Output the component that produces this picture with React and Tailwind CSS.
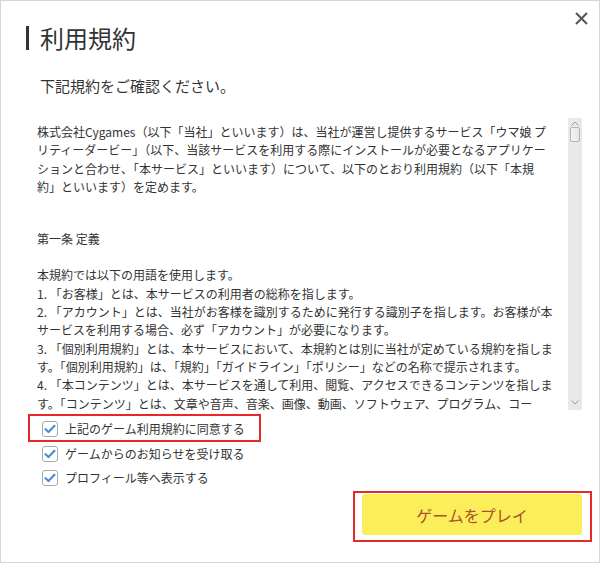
import React from "react";

const intro = [
  "株式会社Cygames（以下「当社」といいます）は、当社が運営し提供するサービス「ウマ娘 プ",
  "リティーダービー」（以下、当該サービスを利用する際にインストールが必要となるアプリケー",
  "ションと合わせ、「本サービス」といいます）について、以下のとおり利用規約（以下「本規",
  "約」といいます）を定めます。",
];

const definitions = [
  "本規約では以下の用語を使用します。",
  "1. 「お客様」とは、本サービスの利用者の総称を指します。",
  "2. 「アカウント」とは、当社がお客様を識別するために発行する識別子を指します。お客様が本",
  "サービスを利用する場合、必ず「アカウント」が必要になります。",
  "3. 「個別利用規約」とは、本サービスにおいて、本規約とは別に当社が定めている規約を指しま",
  "す。「個別利用規約」は、「規約」「ガイドライン」「ポリシー」などの名称で提示されます。",
  "4. 「本コンテンツ」とは、本サービスを通して利用、閲覧、アクセスできるコンテンツを指しま",
  "す。「コンテンツ」とは、文章や音声、音楽、画像、動画、ソフトウェア、プログラム、コー",
];

const CheckBox = () => (
  <span className="flex h-[16px] w-[16px] shrink-0 items-center justify-center rounded-[3px] border border-[#a9a9a9] bg-white">
    <svg width="12" height="10" viewBox="0 0 12 10" fill="none">
      <path
        d="M1.5 5.2 L4.5 8 L10.5 1.8"
        stroke="#4a8ad8"
        strokeWidth="2.2"
        strokeLinecap="round"
        strokeLinejoin="round"
      />
    </svg>
  </span>
);

const Chevron = ({ down }) => (
  <svg width="8" height="5" viewBox="0 0 8 5" fill="none">
    <path
      d={down ? "M0.5 0.5 L4 4 L7.5 0.5" : "M0.5 4.5 L4 1 L7.5 4.5"}
      stroke="#9a9a9a"
      strokeWidth="1"
    />
  </svg>
);

export default function App() {
  return (
    <div
      className="relative flex h-[563px] w-[600px] flex-col border border-[#d6d6d6] bg-white text-[#333]"
      style={{ fontFamily: '"Noto Sans CJK JP", "Noto Sans", sans-serif' }}
    >
      <button className="absolute right-[11px] top-[11px] text-[#555]">
        <svg width="13" height="13" viewBox="0 0 13 13" fill="none">
          <path d="M1 1 L12 12 M12 1 L1 12" stroke="currentColor" strokeWidth="2" />
        </svg>
      </button>

      <div className="ml-[25px] mt-[25px] flex h-[24px] items-center">
        <span className="h-[24px] w-[3px] bg-[#333]" />
        <h1 className="ml-[11px] text-[24px] leading-[24px] text-[#333]">利用規約</h1>
      </div>

      <p className="ml-[39px] mt-[26px] text-[15px] leading-[20px]">
        下記規約をご確認ください。
      </p>

      <div className="mt-[22px] flex h-[292px] pl-[36px] pr-[17px]">
        <div className="flex-1 overflow-hidden pt-[5px] text-[12px] leading-[18.3px] whitespace-nowrap">
          <div className="mb-[34px]">
            {intro.map((line) => (
              <div key={line}>{line}</div>
            ))}
          </div>
          <div className="mb-[18px]">第一条 定義</div>
          {definitions.map((line) => (
            <div key={line}>{line}</div>
          ))}
        </div>
        <div className="flex w-[14px] flex-col items-center bg-[#e9e9e9]">
          <div className="flex h-[8px] items-center pt-[2px]">
            <Chevron />
          </div>
          <div className="mt-[1px] h-[15px] w-[10px] rounded-[2px] border border-[#b3b3b3] bg-gradient-to-r from-[#f4f4f4] to-[#e6e6e6]" />
          <div className="flex-1" />
          <div className="flex h-[10px] items-start pb-[4px]">
            <Chevron down />
          </div>
        </div>
      </div>

      <div className="mt-[4px] flex flex-col pl-[27px] text-[12px] text-[#333]">
        <div className="flex h-[28px] w-[233px] items-center gap-[7px] border-2 border-[#e5282c] pl-[12px] pt-[2px]">
          <CheckBox />
          <span>上記のゲーム利用規約に同意する</span>
        </div>
        <div className="flex h-[24px] items-center gap-[7px] pl-[14px]">
          <CheckBox />
          <span>ゲームからのお知らせを受け取る</span>
        </div>
        <div className="flex h-[24px] items-center gap-[7px] pl-[14px]">
          <CheckBox />
          <span>プロフィール等へ表示する</span>
        </div>
      </div>

      <div className="mt-[1px] flex justify-end pr-[7px]">
        <div className="h-[51px] w-[239px] border-2 border-[#e5282c] pb-[5px] pl-[7px] pr-[8px] pt-[1px]">
          <button className="h-full w-full rounded-[3px] bg-[#faef5b] text-[16px] text-[#b0502c]">
            ゲームをプレイ
          </button>
        </div>
      </div>
    </div>
  );
}
